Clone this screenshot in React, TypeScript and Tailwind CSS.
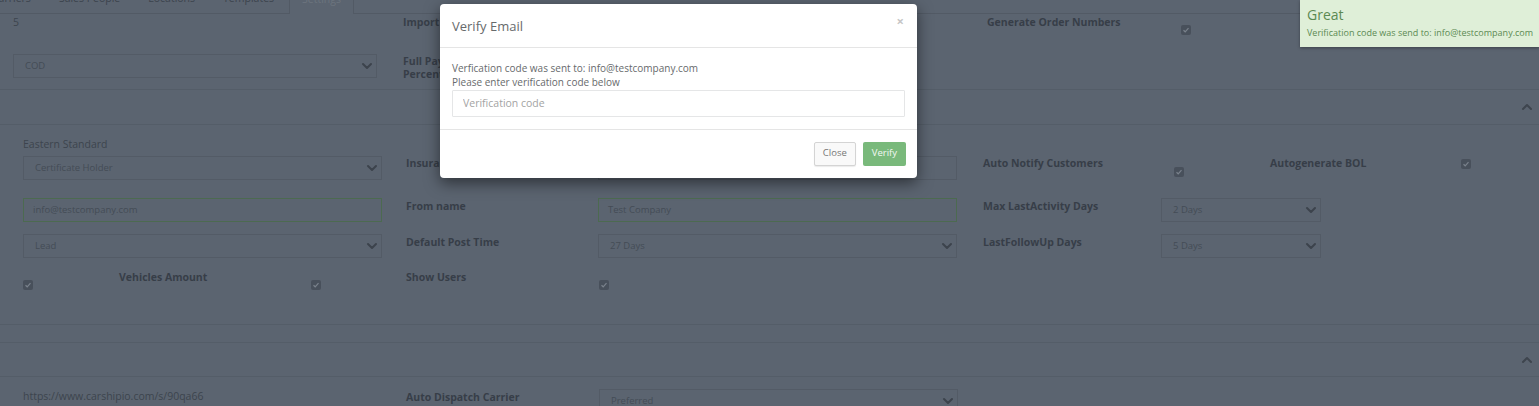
import { ChevronDown, ChevronUp } from 'lucide-react'

const label = 'text-[10.5px] font-bold leading-[14px] text-[#373e48]'

function Select({ value, w }: { value: string; w: string }) {
  return (
    <div
      className={`flex h-[24px] items-center justify-between border border-[#535b66] pl-[11px] pr-[1px] text-[9.5px] text-[#444c56] ${w}`}
    >
      <span>{value}</span>
      <ChevronDown size={16} strokeWidth={3} className="text-[#3c434c]" />
    </div>
  )
}

function Input({ value, w, green }: { value: string; w: string; green?: boolean }) {
  return (
    <div
      className={`flex h-[24px] items-center border pl-[9px] text-[9.5px] text-[#444c56] ${w} ${
        green ? 'border-[#4c6a50]' : 'border-[#535b66]'
      }`}
    >
      {value}
    </div>
  )
}

function Check({ className = '' }: { className?: string }) {
  return (
    <div className={`flex h-[10px] w-[10px] items-center justify-center rounded-[2px] bg-[#48505b] ${className}`}>
      <svg width="8" height="8" viewBox="0 0 8 8">
        <path d="M1.5 4.2 3.2 5.8 6.5 2.2" fill="none" stroke="#7a828c" strokeWidth="1.2" />
      </svg>
    </div>
  )
}

function TitleBar({ className = '' }: { className?: string }) {
  return (
    <div className={`flex h-[35px] items-center justify-end border-b border-[#545d68] pr-[4px] ${className}`}>
      <ChevronUp size={16} strokeWidth={3} className="text-[#3e454e]" />
    </div>
  )
}

export default function App() {
  const tabs = ['Carriers', 'Sales People', 'Locations', 'Templates']

  return (
    <div className="relative h-[406px] w-[1539px] overflow-hidden bg-[#5b6470] font-['Open_Sans',sans-serif] text-[#3d444e]">
      {/* tabs */}
      <div className="-mt-[22px] flex h-[36px] items-stretch border-b border-[#525a65]">
        <div className="-ml-[21px] flex">
          {tabs.map((t) => (
            <div key={t} className="mr-[2px] px-[13px] pt-[13px] text-[10.5px] leading-[14px] text-[#3c434d]">
              {t}
            </div>
          ))}
          <div className="-mb-px border border-b-0 border-[#525a65] bg-[#5b6470] px-[12px] pt-[13px] text-[10.5px] leading-[14px] text-[#6c747e]">
            Settings
          </div>
        </div>
      </div>

      {/* section 1 */}
      <div className="h-[76px] border-b border-[#545d68] pl-[13px] pt-px">
        <div className="flex h-[14px] items-start">
          <div className="w-[390px] text-[10.5px] leading-[14px]">5</div>
          <div className={`w-[584px] ${label}`}>Import Orders</div>
          <div className={`w-[194px] ${label}`}>Generate Order Numbers</div>
          <Check className="mt-[10px]" />
        </div>
        <div className="mt-[25px] flex items-start">
          <div className="w-[390px]">
            <Select value="COD" w="w-[364px]" />
          </div>
          <div className={`w-[86px] pt-[1px] !leading-[13px] ${label}`}>Full Payment Percentage</div>
        </div>
      </div>

      <TitleBar />

      {/* section 2 */}
      <div className="h-[200px] border-b border-[#545d68] pl-[23px] pt-[12px]">
        <div className="flex items-start">
          <div className="w-[383px]">
            <div className="text-[10.5px] leading-[14px]">Eastern Standard</div>
            <div className="mt-[5px]">
              <Select value="Certificate Holder" w="w-[359px]" />
            </div>
          </div>
          <div className={`w-[192px] pt-[19px] ${label}`}>Insurance Certificate</div>
          <div className="w-[385px] pt-[19px]">
            <Input value="" w="w-[359px]" />
          </div>
          <div className={`w-[191px] pt-[19px] ${label}`}>Auto Notify Customers</div>
          <div className="w-[96px] pt-[30px]">
            <Check />
          </div>
          <div className={`w-[191px] pt-[19px] ${label}`}>Autogenerate BOL</div>
          <div className="pt-[22px]">
            <Check />
          </div>
        </div>

        <div className="mt-[18px] flex items-start">
          <div className="w-[383px]">
            <Input value="info@testcompany.com" w="w-[359px]" green />
          </div>
          <div className={`w-[192px] pt-[1px] ${label}`}>From name</div>
          <div className="w-[385px]">
            <Input value="Test Company" w="w-[359px]" green />
          </div>
          <div className={`w-[178px] pt-[1px] ${label}`}>Max LastActivity Days</div>
          <Select value="2 Days" w="w-[160px]" />
        </div>

        <div className="mt-[12px] flex items-start">
          <div className="w-[383px]">
            <Select value="Lead" w="w-[359px]" />
          </div>
          <div className={`w-[192px] pt-[1px] ${label}`}>Default Post Time</div>
          <div className="w-[385px]">
            <Select value="27 Days" w="w-[359px]" />
          </div>
          <div className={`w-[178px] pt-[1px] ${label}`}>LastFollowUp Days</div>
          <Select value="5 Days" w="w-[160px]" />
        </div>

        <div className="mt-[12px] flex items-start">
          <div className="w-[96px] pt-[10px]">
            <Check />
          </div>
          <div className={`w-[192px] ${label}`}>Vehicles Amount</div>
          <div className="w-[95px] pt-[10px]">
            <Check />
          </div>
          <div className={`w-[193px] ${label}`}>Show Users</div>
          <div className="pt-[10px]">
            <Check />
          </div>
        </div>
      </div>

      <TitleBar className="mt-[17px] border-t" />

      {/* section 3 */}
      <div className="flex items-start pl-[23px] pt-[12px]">
        <div className="w-[383px] text-[10.5px] leading-[14px]">https://www.carshipio.com/s/90qa66</div>
        <div className={`w-[193px] pt-[1px] ${label}`}>Auto Dispatch Carrier</div>
        <Select value="Preferred" w="w-[359px]" />
      </div>

      {/* verify email modal */}
      <div className="absolute left-[440px] top-[4px] w-[477px] rounded-[4px] bg-white text-[#676a6c] shadow-[0_5px_15px_rgba(0,0,0,0.5)]">
        <div className="flex h-[44px] items-center justify-between border-b border-[#e5e5e5] pl-[12px] pr-[13px]">
          <div className="pt-[2px] text-[13px]">Verify Email</div>
          <div className="-mt-[8px] text-[13px] font-bold text-[#c6c6c6]">×</div>
        </div>
        <div className="px-[12px] pb-[12px] pt-[13px]">
          <div className="text-[10px] leading-[14px]">Verfication code was sent to: info@testcompany.com</div>
          <div className="text-[10px] leading-[14px]">Please enter verification code below</div>
          <input
            className="h-[27px] w-full rounded-[1px] border border-[#e5e6e7] px-[10px] text-[10.5px] outline-none placeholder:text-[#a3a3a3]"
            placeholder="Verification code"
          />
        </div>
        <div className="flex justify-end gap-[7px] border-t border-[#e5e5e5] pb-[12px] pr-[11px] pt-[12px]">
          <button className="h-[24px] rounded-[2px] border border-[#d4d4d4] bg-[#f9f9f9] px-[8px] text-[9.5px] text-[#777] shadow-[0_1px_1px_rgba(0,0,0,0.08)]">
            Close
          </button>
          <button className="h-[24px] rounded-[2px] bg-[#79b97b] px-[9px] text-[9.5px] text-[#f2f8f2]">
            Verify
          </button>
        </div>
      </div>

      {/* toast */}
      <div className="absolute right-0 top-0 h-[47px] w-[239px] bg-[#dfefd8] pl-[7px] pt-[6px] text-[#5b8a52] shadow-[0_1px_3px_rgba(0,0,0,0.35)]">
        <div className="text-[14px] leading-[18px]">Great</div>
        <div className="mt-[3px] text-[9px] leading-[12px]">Verification code was send to: info@testcompany.com</div>
      </div>
    </div>
  )
}
